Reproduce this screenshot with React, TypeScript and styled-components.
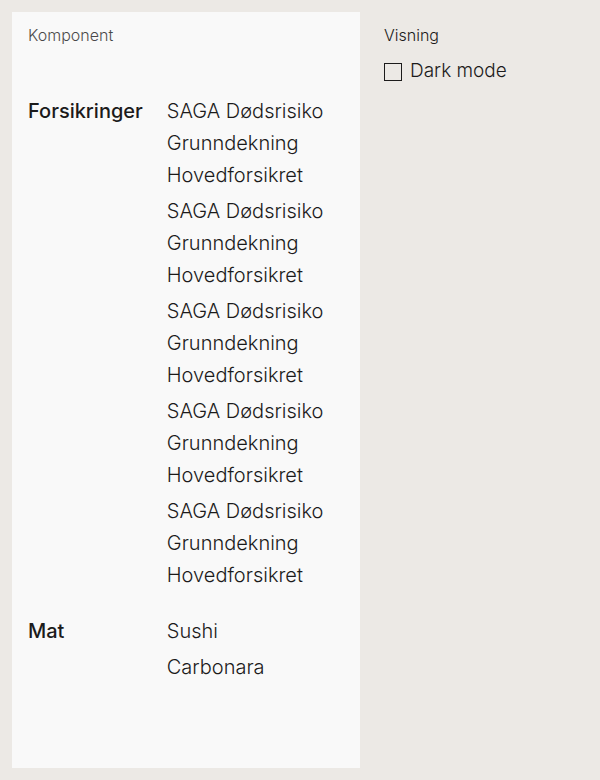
import React, { useState } from "react";
import styled, { createGlobalStyle } from "styled-components";

const GlobalStyle = createGlobalStyle`
  *, *::before, *::after { box-sizing: border-box; }
  body {
    margin: 0;
    background: #ece9e5;
    color: #1c1b1b;
    font-family: Inter, "Liberation Sans", sans-serif;
    font-weight: 300;
  }
`;

const Page = styled.div`
  display: grid;
  grid-template-columns: minmax(0, 1fr) 216px;
  gap: 24px;
  min-height: 100vh;
  padding: 12px 0 12px 12px;
`;

const Example = styled.main<{ $dark: boolean }>`
  padding: 11px 16px 84px;
  background: ${(p) => (p.$dark ? "#1c1b1b" : "#f9f9f9")};
  color: ${(p) => (p.$dark ? "#f9f9f9" : "#1c1b1b")};
`;

const Controls = styled.aside`
  padding-top: 11px;
`;

const Heading = styled.h2<{ $muted?: boolean }>`
  margin: 0;
  font-size: 16px;
  line-height: 24px;
  font-weight: 300;
  opacity: ${(p) => (p.$muted ? 0.8 : 1)};
`;

const List = styled.dl`
  display: grid;
  grid-template-columns: auto 1fr;
  column-gap: 24px;
  row-gap: 24px;
  margin: 48px 0 0;
  font-size: 20px;
  line-height: 32px;
`;

const Group = styled.div`
  display: grid;
  grid-template-columns: subgrid;
  grid-column: 1 / -1;
  row-gap: 4px;
`;

const Term = styled.dt`
  font-weight: 500;
`;

const Detail = styled.dd`
  grid-column: 2;
  margin: 0;
`;

const Choice = styled.label`
  display: flex;
  align-items: flex-start;
  gap: 8px;
  margin-top: 8px;
  font-size: 19px;
  line-height: 32px;
`;

const Checkbox = styled.input`
  appearance: none;
  width: 18px;
  height: 18px;
  margin: 8px 0 0;
  border: 1px solid #1c1b1b;
  background: transparent;
  &:checked { background: #1c1b1b; box-shadow: inset 0 0 0 3px #ece9e5; }
`;

const insurance = ["SAGA Dødsrisiko", "Grunndekning", "Hovedforsikret"];
const groups = [
  { term: "Forsikringer", details: Array.from({ length: 5 }, () => insurance) },
  { term: "Mat", details: [["Sushi"], ["Carbonara"]] },
];

export default function App() {
  const [dark, setDark] = useState(false);
  return (
    <>
      <GlobalStyle />
      <Page>
        <Example $dark={dark}>
          <Heading $muted>Komponent</Heading>
          <List>
            {groups.map((group) => (
              <Group key={group.term}>
                <Term>{group.term}</Term>
                {group.details.map((lines, i) => (
                  <Detail key={i}>
                    {lines.map((line) => <div key={line}>{line}</div>)}
                  </Detail>
                ))}
              </Group>
            ))}
          </List>
        </Example>
        <Controls>
          <Heading>Visning</Heading>
          <Choice>
            <Checkbox type="checkbox" checked={dark} onChange={(e) => setDark(e.target.checked)} />
            Dark mode
          </Choice>
        </Controls>
      </Page>
    </>
  );
}
